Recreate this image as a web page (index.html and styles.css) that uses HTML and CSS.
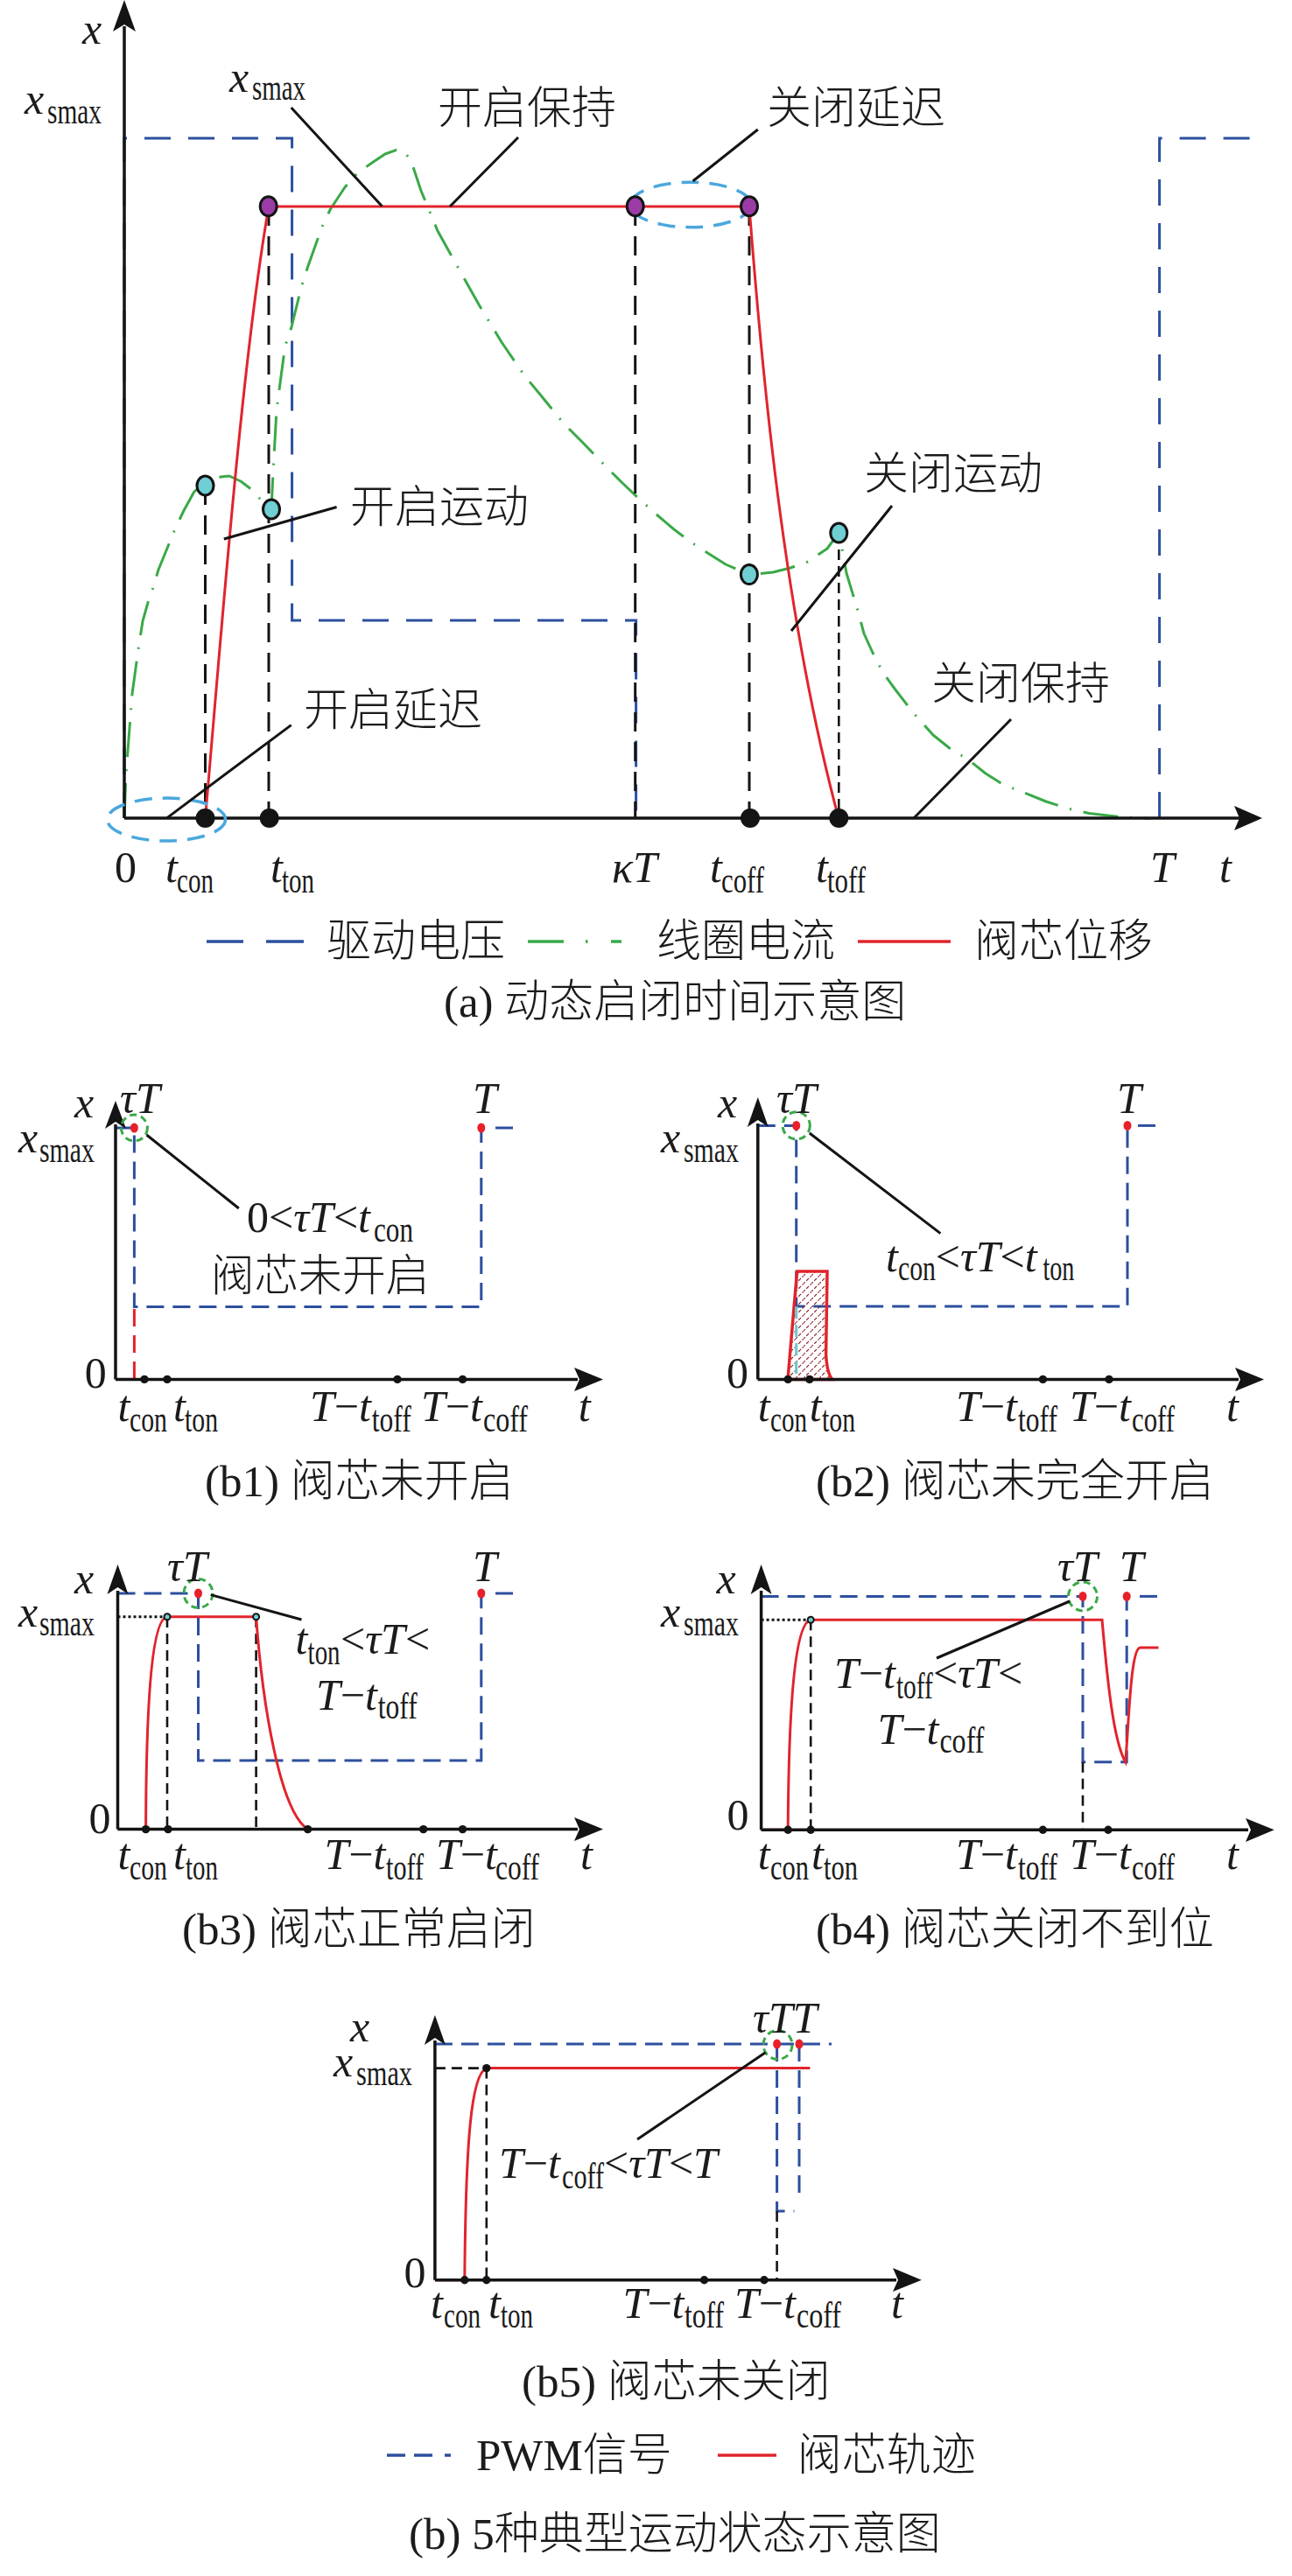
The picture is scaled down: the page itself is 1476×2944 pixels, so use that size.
FILE: index.html
```html
<!DOCTYPE html>
<html lang="zh-CN">
<head>
<meta charset="utf-8">
<title>动态启闭时间示意图</title>
<link rel="stylesheet" href="styles.css">
</head>
<body>
<div class="page">

<section class="fig-a">
<svg class="chart-a" viewBox="0 0 1476 1044" width="1476" height="1044">
  <!-- drive voltage -->
  <path class="bl" d="M142,935V158H333.6V709H726.6V935"/>
  <path class="bl" d="M1324.6,935V158H1428"/>
  <!-- coil current -->
  <path class="gr" d="M142,935L144,884L151,793L158,742L163,710L170,685L175.5,670L181,651L192.5,623L200.6,603L210,583.5L221.8,562L232,553L243,546L262,544L275,550L285.5,558L297,570L310,582L312,540L316,468L325.6,396L332.7,375L344.5,327L351.6,305L368,259L377.5,239L394,214L408,198L425,186L440,176L453,171.4L462,173L470,185L481,218L500,264L524,307L547,348L573,391L599,429L618,452L644,484L665,505L691,532L710,551L730,570L750,588L770,605L790,620L810,633L829,645L845,652L856,656.6L868,655.5L883,654L903,649L923,642L945,627L958,609L962,627L967,655L980,698L987,724L997,746L1009,769L1022,787L1042,813L1066,840L1086,856L1106,868L1126,884L1145,896L1170,906L1195,916L1220,924L1244,929.5L1284,934L1314,935.4"/>
  <!-- black dashed guides -->
  <path class="kd" d="M234.5,555V935M307,236V935M725.7,236V935M856,236V935"/>
  <path class="kd2" d="M958.3,609V935"/>
  <!-- valve displacement -->
  <path class="rd" d="M234.5,935C250,760 275,420 307,236H856C870,420 895,700 958,935"/>
  <!-- axes -->
  <path class="ax" d="M142,935V30M142,935H1420"/>
  <polygon class="arr" points="142,0 155,36 142,28 129,36"/>
  <polygon class="arr" points="1442,935 1410,949 1416,935 1410,921"/>
  <!-- ellipses -->
  <ellipse class="el" cx="190" cy="936.6" rx="67.5" ry="24.5"/>
  <ellipse class="el" cx="789" cy="234" rx="69" ry="25.7"/>
  <!-- leaders -->
  <path class="ld" d="M332.7,123L436.5,235.7M592,157L514,236M865.8,148L791.6,207M384.6,579.5L255.8,616M332.7,828.6L191,934.6M1019,578L904,721M1155,822L1044,935"/>
  <!-- points -->
  <ellipse class="pp" cx="306.7" cy="235.7" rx="9.5" ry="11"/>
  <ellipse class="pp" cx="725.7" cy="235.7" rx="9.5" ry="11"/>
  <ellipse class="pp" cx="856" cy="235.7" rx="9.5" ry="11"/>
  <ellipse class="cy" cx="234.5" cy="555" rx="9.5" ry="11"/>
  <ellipse class="cy" cx="310" cy="582" rx="9.5" ry="11"/>
  <ellipse class="cy" cx="855.9" cy="656.6" rx="9.5" ry="11"/>
  <ellipse class="cy" cx="958.3" cy="609" rx="9.5" ry="11"/>
  <circle class="kdt" cx="234.5" cy="935" r="11"/>
  <circle class="kdt" cx="307.7" cy="935" r="11"/>
  <circle class="kdt" cx="857" cy="935" r="11"/>
  <circle class="kdt" cx="958.3" cy="935" r="11"/>
  <!-- labels -->
  <text class="ti" x="94" y="50">x</text>
  <text class="ti" x="28" y="130">x</text><text class="ts" x="54" y="141" textLength="62" lengthAdjust="spacingAndGlyphs">smax</text>
  <text class="ti" x="262" y="105">x</text><text class="ts" x="288" y="114" textLength="61" lengthAdjust="spacingAndGlyphs">smax</text>
  <text class="tc" x="500" y="141">开启保持</text>
  <text class="tc" x="876" y="141">关闭延迟</text>
  <text class="tc" x="400" y="597">开启运动</text>
  <text class="tc" x="347" y="829">开启延迟</text>
  <text class="tc" x="987" y="559">关闭运动</text>
  <text class="tc" x="1064" y="799">关闭保持</text>
  <text class="tr" x="131" y="1008">0</text>
  <text class="ti" x="189" y="1008">t</text><text class="ts" x="202" y="1020" textLength="42" lengthAdjust="spacingAndGlyphs">con</text>
  <text class="ti" x="309" y="1008">t</text><text class="ts" x="322" y="1020" textLength="37" lengthAdjust="spacingAndGlyphs">ton</text>
  <text class="ti" x="699" y="1008">κT</text>
  <text class="ti" x="811" y="1008">t</text><text class="ts" x="824" y="1020" textLength="49" lengthAdjust="spacingAndGlyphs">coff</text>
  <text class="ti" x="932" y="1008">t</text><text class="ts" x="945" y="1020" textLength="44" lengthAdjust="spacingAndGlyphs">toff</text>
  <text class="ti" x="1314" y="1008">T</text>
  <text class="ti" x="1393" y="1008">t</text>
</svg>

<div class="legend legend-a">
  <svg class="key key-blue" width="111" height="10" viewBox="0 0 111 10"><path d="M0,5H42M68,5H111"/></svg>
  <span class="lg lg-1">驱动电压</span>
  <svg class="key key-green" width="107" height="10" viewBox="0 0 107 10"><path d="M0,5H41M66,5H68.5M95,5H107"/></svg>
  <span class="lg lg-2">线圈电流</span>
  <svg class="key key-red" width="106" height="10" viewBox="0 0 106 10"><path d="M0,5H106"/></svg>
  <span class="lg lg-3">阀芯位移</span>
</div>
<div class="cap cap-a">(a) 动态启闭时间示意图</div>
</section>

<section class="row row-1">
<div class="cell">
<svg class="chart" viewBox="0 1183 738 467" width="738" height="467">
  <path class="bl2" d="M132,1289H153.4V1493.6H549.8V1289"/>
  <path class="bl2" d="M566,1289H586"/>
  <path class="rd rdash" d="M153.4,1576V1493.6"/>
  <path class="rd" d="M132,1576.4H153.4"/>
  <path class="ax" d="M132,1576.4V1285M132,1576.4H660"/>
  <polygon class="arr" points="132,1258 144,1290 132,1282 120,1290"/>
  <polygon class="arr" points="689,1576.4 656,1590 662,1576.4 656,1563"/>
  <circle class="gc" cx="153.4" cy="1289" r="15"/>
  <ellipse class="rdt" cx="153.4" cy="1289" rx="4.5" ry="5.5"/>
  <ellipse class="rdt" cx="549.8" cy="1289" rx="4.5" ry="5.5"/>
  <line class="ld" x1="167.5" y1="1297" x2="272.8" y2="1381"/>
  <circle class="kdt" cx="165" cy="1576.4" r="4.7"/>
  <circle class="kdt" cx="191" cy="1576.4" r="4.7"/>
  <circle class="kdt" cx="454" cy="1576.4" r="4.7"/>
  <circle class="kdt" cx="528.5" cy="1576.4" r="4.7"/>
  <text class="ti" x="137" y="1272">τT</text>
  <text class="ti" x="540" y="1272">T</text>
  <text class="ti" x="85" y="1277">x</text>
  <text class="ti" x="21" y="1317">x</text><text class="ts" x="45" y="1327.5" textLength="63" lengthAdjust="spacingAndGlyphs">smax</text>
  <text class="tr" x="282" y="1408">0&lt;<tspan class="it">τT</tspan>&lt;<tspan class="it">t</tspan></text><text class="ts" x="427" y="1418.6" textLength="45" lengthAdjust="spacingAndGlyphs">con</text>
  <text class="tc2" x="240.7" y="1475">阀芯未开启</text>
  <text class="tr" x="96.7" y="1586">0</text>
  <text class="ti" x="134.5" y="1624">t</text><text class="ts" x="148" y="1636" textLength="43" lengthAdjust="spacingAndGlyphs">con</text>
  <text class="ti" x="198" y="1624">t</text><text class="ts" x="211" y="1636" textLength="38" lengthAdjust="spacingAndGlyphs">ton</text>
  <text class="ti" x="354" y="1624">T<tspan class="rm">−</tspan>t</text><text class="ts" x="424.7" y="1636" textLength="45" lengthAdjust="spacingAndGlyphs">toff</text>
  <text class="ti" x="481" y="1624">T<tspan class="rm">−</tspan>t</text><text class="ts" x="552" y="1636" textLength="51" lengthAdjust="spacingAndGlyphs">coff</text>
  <text class="ti" x="660.7" y="1624">t</text>
</svg>
<div class="cap cap-b1">(b1) 阀芯未开启</div>
</div>

<div class="cell">
<svg class="chart" viewBox="738 1183 738 467" width="738" height="467">
  <defs>
    <pattern id="hatch" patternUnits="userSpaceOnUse" width="9" height="9">
      <path d="M-1,10L10,-1" stroke="#8a1d22" stroke-width="1.1" stroke-dasharray="4 2"/>
    </pattern>
  </defs>
  <path class="bl2" d="M865.8,1286.4H909.7V1493H1288V1286.4"/>
  <path class="bl2" d="M1300,1286.4H1326"/>
  <path class="red-fill" d="M900,1576.4L910.6,1453H945L943.6,1548C944.5,1565 947,1572 950.7,1576.4Z"/>
  <path class="cyd" d="M909.7,1493V1576"/>
  <path class="rd" d="M865.8,1576.4H900"/>
  <path class="ax" d="M865.8,1576.4V1284M865.8,1576.4H1415"/>
  <polygon class="arr" points="865.8,1254 877.8,1288 865.8,1280 853.8,1288"/>
  <polygon class="arr" points="1444,1576.4 1411,1590 1417,1576.4 1411,1563"/>
  <circle class="gc" cx="909.7" cy="1286.4" r="15.6"/>
  <ellipse class="rdt" cx="909.7" cy="1286.4" rx="4.5" ry="5.5"/>
  <ellipse class="rdt" cx="1288" cy="1286.4" rx="4.5" ry="5.5"/>
  <line class="ld" x1="924.8" y1="1295" x2="1074.4" y2="1409.6"/>
  <circle class="kdt" cx="900.2" cy="1576.4" r="4.7"/>
  <circle class="kdt" cx="924.8" cy="1576.4" r="4.7"/>
  <circle class="kdt" cx="1191.4" cy="1576.4" r="4.7"/>
  <circle class="kdt" cx="1267" cy="1576.4" r="4.7"/>
  <text class="ti" x="887" y="1272">τT</text>
  <text class="ti" x="1276" y="1272">T</text>
  <text class="ti" x="820" y="1277">x</text>
  <text class="ti" x="755" y="1317">x</text><text class="ts" x="781" y="1327.5" textLength="63" lengthAdjust="spacingAndGlyphs">smax</text>
  <text class="ti" x="1012" y="1452.5">t</text><text class="ts" x="1026" y="1463" textLength="43" lengthAdjust="spacingAndGlyphs">con</text>
  <text class="tr" x="1068.7" y="1452.5">&lt;<tspan class="it">τT</tspan>&lt;<tspan class="it">t</tspan></text><text class="ts" x="1191.4" y="1463" textLength="36" lengthAdjust="spacingAndGlyphs">ton</text>
  <text class="tr" x="830" y="1586">0</text>
  <text class="ti" x="865.8" y="1624">t</text><text class="ts" x="880" y="1636" textLength="42" lengthAdjust="spacingAndGlyphs">con</text>
  <text class="ti" x="924.8" y="1624">t</text><text class="ts" x="939" y="1636" textLength="38" lengthAdjust="spacingAndGlyphs">ton</text>
  <text class="ti" x="1092" y="1624">T<tspan class="rm">−</tspan>t</text><text class="ts" x="1163" y="1636" textLength="45" lengthAdjust="spacingAndGlyphs">toff</text>
  <text class="ti" x="1222" y="1624">T<tspan class="rm">−</tspan>t</text><text class="ts" x="1293" y="1636" textLength="49" lengthAdjust="spacingAndGlyphs">coff</text>
  <text class="ti" x="1401" y="1624">t</text>
</svg>
<div class="cap cap-b2">(b2) 阀芯未完全开启</div>
</div>
</section>

<section class="row row-2">
<div class="cell">
<svg class="chart" viewBox="0 1736 738 429" width="738" height="429">
  <path class="bl2" d="M134.5,1821H226.5V2012H549.8V1821"/>
  <path class="bl2" d="M566,1821H586"/>
  <path class="kdot" d="M134.5,1847.8H191"/>
  <path class="kd2" d="M191,1848V2090M292.6,1848V2090"/>
  <path class="rd" d="M134.5,2090.6H166.6C167,1930 175,1850 191,1847.8H292.6C300,1950 320,2070 351.6,2090.6"/>
  <path class="ax" d="M134.5,2090.6V1818M134.5,2090.6H660"/>
  <polygon class="arr" points="134.5,1788 146.5,1822 134.5,1814 122.5,1822"/>
  <polygon class="arr" points="689,2090.6 656,2104 662,2090.6 656,2077"/>
  <circle class="gc" cx="226.5" cy="1821" r="16.5"/>
  <ellipse class="rdt" cx="226.5" cy="1821" rx="4.5" ry="5.5"/>
  <ellipse class="rdt" cx="549.8" cy="1821" rx="4.5" ry="5.5"/>
  <circle class="odt" cx="191" cy="1847.8" r="3.5"/>
  <circle class="odt" cx="292.6" cy="1847.8" r="3.5"/>
  <line class="ld" x1="240.7" y1="1822.6" x2="344.5" y2="1851"/>
  <circle class="kdt" cx="166.6" cy="2090.6" r="4.7"/>
  <circle class="kdt" cx="192" cy="2090.6" r="4.7"/>
  <circle class="kdt" cx="351.6" cy="2090.6" r="4.7"/>
  <circle class="kdt" cx="483.7" cy="2090.6" r="4.7"/>
  <circle class="kdt" cx="528.5" cy="2090.6" r="4.7"/>
  <text class="ti" x="191" y="1807">τT</text>
  <text class="ti" x="540" y="1807">T</text>
  <text class="ti" x="85" y="1821">x</text>
  <text class="ti" x="21" y="1859">x</text><text class="ts" x="45" y="1869" textLength="63" lengthAdjust="spacingAndGlyphs">smax</text>
  <text class="ti" x="337.4" y="1889.8">t</text><text class="ts" x="351.6" y="1902" textLength="37" lengthAdjust="spacingAndGlyphs">ton</text>
  <text class="tr" x="389" y="1889.8">&lt;<tspan class="it">τT</tspan>&lt;</text>
  <text class="ti" x="361" y="1953.5">T<tspan class="rm">−</tspan>t</text><text class="ts" x="431.8" y="1963.8" textLength="45" lengthAdjust="spacingAndGlyphs">toff</text>
  <text class="tr" x="101.5" y="2094.7">0</text>
  <text class="ti" x="134.5" y="2136">t</text><text class="ts" x="148" y="2148" textLength="43" lengthAdjust="spacingAndGlyphs">con</text>
  <text class="ti" x="198" y="2136">t</text><text class="ts" x="212" y="2148" textLength="37" lengthAdjust="spacingAndGlyphs">ton</text>
  <text class="ti" x="370.5" y="2136">T<tspan class="rm">−</tspan>t</text><text class="ts" x="441" y="2148" textLength="43" lengthAdjust="spacingAndGlyphs">toff</text>
  <text class="ti" x="497.9" y="2136">T<tspan class="rm">−</tspan>t</text><text class="ts" x="566" y="2148" textLength="50" lengthAdjust="spacingAndGlyphs">coff</text>
  <text class="ti" x="663" y="2136">t</text>
</svg>
<div class="cap cap-b3">(b3) 阀芯正常启闭</div>
</div>

<div class="cell">
<svg class="chart" viewBox="738 1736 738 429" width="738" height="429">
  <path class="bl2" d="M869.6,1824.4H1237V2013.8H1287.2V1824.4"/>
  <path class="bl2" d="M1302,1824.4H1324"/>
  <path class="kd2" d="M1237,2013.8V2091M926.2,1851.2V2091"/>
  <path class="kdot" d="M869.6,1851.2H926.2"/>
  <path class="rd" d="M869.6,2091.2H900.2C901,1950 908,1855 926.2,1851.2H1259C1265,1920 1272,1990 1285.8,2013.8C1290,1960 1292,1885 1302.3,1883H1323.5"/>
  <path class="ax" d="M869.6,2091.2V1818M869.6,2091.2H1426"/>
  <polygon class="arr" points="869.6,1788 881.6,1822 869.6,1814 857.6,1822"/>
  <polygon class="arr" points="1455.7,2091.2 1423,2105 1429,2091.2 1423,2078"/>
  <circle class="gc" cx="1237" cy="1824.4" r="16.5"/>
  <ellipse class="rdt" cx="1237" cy="1824.4" rx="4.5" ry="5.5"/>
  <ellipse class="rdt" cx="1287.2" cy="1824.4" rx="4.5" ry="5.5"/>
  <circle class="odt" cx="926.2" cy="1851.2" r="3.5"/>
  <line class="ld" x1="1222" y1="1830" x2="1070" y2="1895"/>
  <circle class="kdt" cx="900.2" cy="2091.2" r="4.7"/>
  <circle class="kdt" cx="926.2" cy="2091.2" r="4.7"/>
  <circle class="kdt" cx="1191.4" cy="2091.2" r="4.7"/>
  <circle class="kdt" cx="1266" cy="2091.2" r="4.7"/>
  <text class="ti" x="1208" y="1807">τT</text>
  <text class="ti" x="1278.7" y="1807">T</text>
  <text class="ti" x="818.6" y="1821">x</text>
  <text class="ti" x="755" y="1859">x</text><text class="ts" x="781" y="1869" textLength="63" lengthAdjust="spacingAndGlyphs">smax</text>
  <text class="ti" x="953" y="1929.4">T<tspan class="rm">−</tspan>t</text><text class="ts" x="1023.9" y="1941.4" textLength="42" lengthAdjust="spacingAndGlyphs">toff</text>
  <text class="tr" x="1066" y="1929.4">&lt;<tspan class="it">τT</tspan>&lt;</text>
  <text class="ti" x="1002.6" y="1993">T<tspan class="rm">−</tspan>t</text><text class="ts" x="1073.4" y="2003.4" textLength="51" lengthAdjust="spacingAndGlyphs">coff</text>
  <text class="tr" x="830.4" y="2091">0</text>
  <text class="ti" x="865.8" y="2136">t</text><text class="ts" x="880" y="2148" textLength="44" lengthAdjust="spacingAndGlyphs">con</text>
  <text class="ti" x="927" y="2136">t</text><text class="ts" x="941" y="2148" textLength="39" lengthAdjust="spacingAndGlyphs">ton</text>
  <text class="ti" x="1092" y="2136">T<tspan class="rm">−</tspan>t</text><text class="ts" x="1163" y="2148" textLength="45" lengthAdjust="spacingAndGlyphs">toff</text>
  <text class="ti" x="1222" y="2136">T<tspan class="rm">−</tspan>t</text><text class="ts" x="1293" y="2148" textLength="49" lengthAdjust="spacingAndGlyphs">coff</text>
  <text class="ti" x="1401" y="2136">t</text>
</svg>
<div class="cap cap-b4">(b4) 阀芯关闭不到位</div>
</div>
</section>

<section class="row-3">
<svg class="chart chart-b5" viewBox="360 2245 740 435" width="740" height="435">
  <path class="bl2" d="M496.9,2336H950"/>
  <path class="bl2" d="M887.6,2336V2527H907.4M913,2336V2515"/>
  <path class="kd2" d="M887.6,2527V2605.7M555.8,2363.6V2605.7"/>
  <path class="kd2" d="M496.9,2363.6H555.8"/>
  <path class="rd" d="M496.9,2605.7H530.8C532,2450 538,2370 555.8,2363.6H925.4"/>
  <path class="ax" d="M496.9,2605.7V2332M496.9,2605.7H1024"/>
  <polygon class="arr" points="496.9,2302.9 508.9,2337 496.9,2329 484.9,2337"/>
  <polygon class="arr" points="1052.8,2605.7 1020,2619 1026,2605.7 1020,2592"/>
  <circle class="gc" cx="888.5" cy="2337" r="16.5"/>
  <ellipse class="rdt" cx="887.6" cy="2336" rx="4.5" ry="5.5"/>
  <ellipse class="rdt" cx="913" cy="2336" rx="4.5" ry="5.5"/>
  <circle class="kdt" cx="555.8" cy="2363.6" r="4.7"/>
  <line class="ld" x1="874.4" y1="2345.7" x2="728" y2="2445"/>
  <circle class="kdt" cx="530.8" cy="2605.7" r="4.7"/>
  <circle class="kdt" cx="555.8" cy="2605.7" r="4.7"/>
  <circle class="kdt" cx="804.5" cy="2605.7" r="4.7"/>
  <circle class="kdt" cx="873" cy="2605.7" r="4.7"/>
  <text class="ti" x="860" y="2322.5">τTT</text>
  <text class="ti" x="400" y="2333">x</text>
  <text class="ti" x="381" y="2372.5">x</text><text class="ts" x="407" y="2383" textLength="64" lengthAdjust="spacingAndGlyphs">smax</text>
  <text class="ti" x="570" y="2488.6">T<tspan class="rm">−</tspan>t</text><text class="ts" x="642" y="2501" textLength="48" lengthAdjust="spacingAndGlyphs">coff</text>
  <text class="tr" x="690" y="2488.6">&lt;<tspan class="it">τT</tspan>&lt;<tspan class="it">T</tspan></text>
  <text class="tr" x="461.5" y="2613.6">0</text>
  <text class="ti" x="492" y="2649">t</text><text class="ts" x="507" y="2660" textLength="42" lengthAdjust="spacingAndGlyphs">con</text>
  <text class="ti" x="558" y="2649">t</text><text class="ts" x="572" y="2660" textLength="37" lengthAdjust="spacingAndGlyphs">ton</text>
  <text class="ti" x="711.6" y="2649">T<tspan class="rm">−</tspan>t</text><text class="ts" x="782" y="2660" textLength="45" lengthAdjust="spacingAndGlyphs">toff</text>
  <text class="ti" x="839" y="2649">T<tspan class="rm">−</tspan>t</text><text class="ts" x="910" y="2660" textLength="51" lengthAdjust="spacingAndGlyphs">coff</text>
  <text class="ti" x="1018" y="2649">t</text>
</svg>
<div class="cap cap-b5">(b5) 阀芯未关闭</div>
</section>

<div class="legend legend-b">
  <svg class="key key-pwm" width="74" height="10" viewBox="0 0 74 10"><path d="M0,5H21M31,5H52M66,5H73"/></svg>
  <span class="lg lg-pwm">PWM信号</span>
  <svg class="key key-red key-trace" width="67" height="10" viewBox="0 0 67 10"><path d="M0,5H67"/></svg>
  <span class="lg lg-trace">阀芯轨迹</span>
</div>
<div class="cap cap-b">(b) 5种典型运动状态示意图</div>

</div>
</body>
</html>
```

FILE: styles.css
```css
html, body {
  margin: 0;
  padding: 0;
  background: #ffffff;
}

body {
  font-family: "Liberation Serif", "Noto Sans CJK SC", serif;
  color: #1b1b1b;
}

.page {
  width: 1476px;
  height: 2944px;
  overflow: hidden;
}

svg {
  display: block;
  overflow: visible;
}

/* ---------- strokes ---------- */
.ax { stroke: #141414; stroke-width: 3.5; fill: none; }
.arr { fill: #141414; }
.bl { stroke: #2d4f9e; stroke-width: 3; fill: none; stroke-dasharray: 30 20; }
.bl2 { stroke: #2d4f9e; stroke-width: 3; fill: none; stroke-dasharray: 20 10; }
.rd { stroke: #e1242c; stroke-width: 3; fill: none; }
.rdash { stroke-dasharray: 20 10; }
.kd { stroke: #141414; stroke-width: 3; fill: none; stroke-dasharray: 22 12; }
.kd2 { stroke: #141414; stroke-width: 2.6; fill: none; stroke-dasharray: 12 7; }
.kdot { stroke: #141414; stroke-width: 3; fill: none; stroke-dasharray: 3 3; }
.ld { stroke: #141414; stroke-width: 3; fill: none; }
.gr { stroke: #3aa948; stroke-width: 3; fill: none; stroke-dasharray: 40 14 2 14; stroke-linejoin: round; }
.el { stroke: #4aa7dd; stroke-width: 3.5; fill: none; stroke-dasharray: 20 12; }
.gc { stroke: #3aa948; stroke-width: 3; fill: none; stroke-dasharray: 8 5; }
.cyd { stroke: #6cc8cc; stroke-width: 3; fill: none; stroke-dasharray: 14 7; }
.red-fill { fill: url(#hatch); stroke: #e1242c; stroke-width: 3.5; }

/* ---------- markers ---------- */
.pp { fill: #9b3ca6; stroke: #141414; stroke-width: 3; }
.cy { fill: #6fcfd3; stroke: #141414; stroke-width: 3; }
.kdt { fill: #141414; }
.rdt { fill: #e8202a; }
.odt { fill: #6fcfd3; stroke: #141414; stroke-width: 2; }

/* ---------- chart text ---------- */
.ti { font-family: "Liberation Serif", serif; font-style: italic; font-size: 50px; fill: #1b1b1b; }
.tr { font-family: "Liberation Serif", serif; font-size: 50px; fill: #1b1b1b; }
.ts { font-family: "Liberation Serif", serif; font-size: 42px; fill: #1b1b1b; }
.it { font-style: italic; }
.rm { font-style: normal; }
.tc { font-family: "Noto Sans CJK SC", sans-serif; font-weight: 300; font-size: 51px; fill: #1b1b1b; }
.tc2 { font-family: "Noto Sans CJK SC", sans-serif; font-weight: 300; font-size: 50px; fill: #1b1b1b; }

/* ---------- legends ---------- */
.legend {
  display: flex;
  align-items: center;
  font-weight: 300;
  font-size: 51px;
  line-height: 1;
}
.legend-a { height: 64px; padding-left: 236px; }
.legend-b { height: 84px; padding-left: 442px; }

.key path { fill: none; stroke-width: 3.5; }
.key-blue path { stroke: #2d4f9e; }
.key-green path { stroke: #3aa948; }
.key-red path { stroke: #e1242c; }
.key-pwm path { stroke: #2d4f9e; }

.lg { white-space: nowrap; }
.lg-1 { margin-left: 26px; margin-right: 26px; }
.lg-2 { margin-left: 40px; margin-right: 26px; }
.lg-3 { margin-left: 27px; }
.lg-pwm { margin-left: 28px; margin-right: 52px; }
.lg-trace { margin-left: 24px; }

/* ---------- captions ---------- */
.cap {
  font-size: 51px;
  font-weight: 300;
  white-space: nowrap;
}
.cap-a { height: 75px; line-height: 75px; padding-left: 507px; }

.row {
  display: grid;
  grid-template-columns: 738px 738px;
}
.row-1 .cap { height: 86px; line-height: 86px; }
.row-2 .cap { height: 80px; line-height: 80px; }
.cap-b1 { padding-left: 234px; }
.cap-b2 { padding-left: 194px; }
.cap-b3 { padding-left: 208px; }
.cap-b4 { padding-left: 194px; }

.chart-b5 { margin-left: 360px; }
.cap-b5 { height: 84px; line-height: 84px; padding-left: 596px; }
.cap-b { height: 96px; line-height: 96px; padding-left: 467px; }
```
